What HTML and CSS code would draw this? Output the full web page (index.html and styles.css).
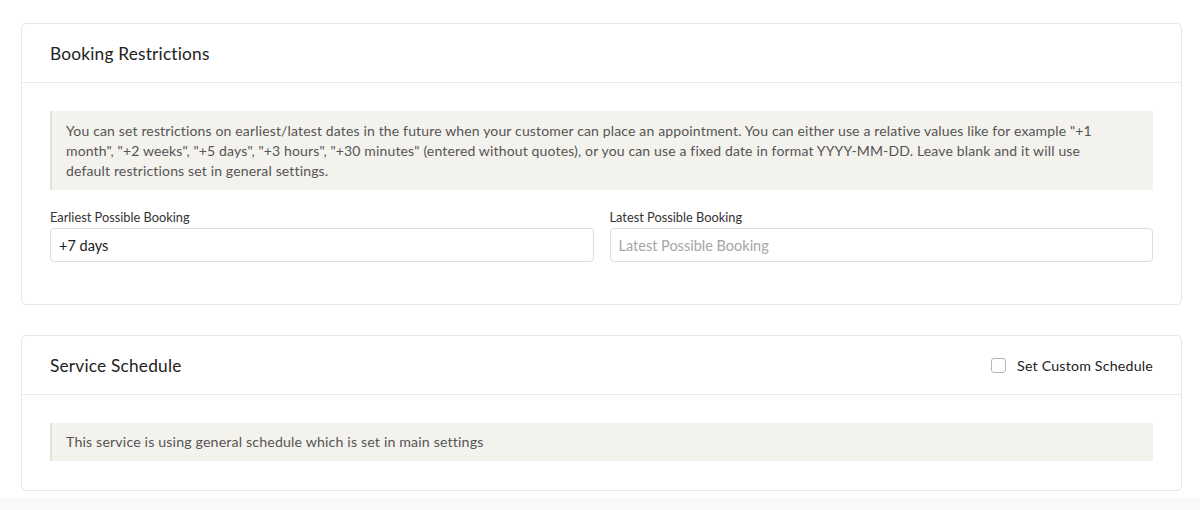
FILE: index.html
```html
<!DOCTYPE html>
<html>
<head>
<meta charset="utf-8">
<link rel="stylesheet" href="styles.css">
</head>
<body>
<div class="page">
  <section class="card">
    <header class="card-head">
      <h2 class="card-title">Booking Restrictions</h2>
    </header>
    <div class="card-body restrictions">
      <div class="notice">You can set restrictions on earliest/latest dates in the future when your customer can place an appointment. You can either use a relative values like for example "+1 month", "+2 weeks", "+5 days", "+3 hours", "+30 minutes" (entered without quotes), or you can use a fixed date in format YYYY-MM-DD. Leave blank and it will use default restrictions set in general settings.</div>
      <div class="fields">
        <label class="field">
          <span class="field-label">Earliest Possible Booking</span>
          <input class="field-input" type="text" value="+7 days">
        </label>
        <label class="field">
          <span class="field-label">Latest Possible Booking</span>
          <input class="field-input" type="text" placeholder="Latest Possible Booking">
        </label>
      </div>
    </div>
  </section>
  <section class="card">
    <header class="card-head">
      <h2 class="card-title">Service Schedule</h2>
      <label class="check"><span class="check-box"></span><span>Set Custom Schedule</span></label>
    </header>
    <div class="card-body schedule">
      <div class="notice single">This service is using general schedule which is set in main settings</div>
    </div>
  </section>
</div>
<div class="footer-band"></div>
</body>
</html>
```
FILE: styles.css
```css
html, body {
  margin: 0;
  padding: 0;
  background: #fff;
  font-family: "Lato", "Noto Sans", sans-serif;
  color: #333;
}
.page {
  padding: 23px 18px 0 21px;
  display: flex;
  flex-direction: column;
  gap: 30px;
}
.card {
  border: 1px solid #e6e6e6;
  border-radius: 5px;
  background: #fff;
}
.card-head {
  height: 58px;
  border-bottom: 1px solid #e9e9e9;
  padding: 0 28px;
  display: flex;
  align-items: center;
  justify-content: space-between;
}
.card-title {
  margin: 0;
  font-size: 17.3px;
  font-weight: 400;
  color: #222;
  letter-spacing: 0.2px;
}
.card-body {
  padding: 28px 28px 0;
}
.restrictions { padding-bottom: 42px; }
.schedule { padding-bottom: 29px; }
.notice {
  background: #f4f2ed;
  border-left: 2px solid #e4e1d9;
  padding: 10px 44px 9px 14px;
  font-size: 14px;
  line-height: 20px;
  color: #555;
  letter-spacing: 0.15px;
}
.notice.single { padding: 9px 14px; font-size: 14.2px; }
.fields {
  margin-top: 19px;
  display: grid;
  grid-template-columns: 1fr 1fr;
  gap: 16px;
}
.field {
  display: flex;
  flex-direction: column;
  gap: 3px;
}
.field-label {
  font-size: 12.8px;
  line-height: 16px;
  color: #333;
}
.field-input {
  height: 34px;
  box-sizing: border-box;
  border: 1px solid #dddddd;
  border-radius: 4px;
  padding: 0 8px;
  font-family: inherit;
  font-size: 14.5px;
  color: #222;
  background: #fff;
  outline: none;
}
.field-input::placeholder { color: #a6a6a6; }
.check {
  display: flex;
  align-items: center;
  gap: 11px;
  font-size: 14.2px;
  color: #222;
  letter-spacing: 0.2px;
}
.check-box {
  width: 13px;
  height: 13px;
  border: 1px solid #b5b5b5;
  border-radius: 3px;
  background: #fff;
}
.footer-band {
  height: 13px;
  margin-top: 7px;
  background: #f9f9f9;
}
```
